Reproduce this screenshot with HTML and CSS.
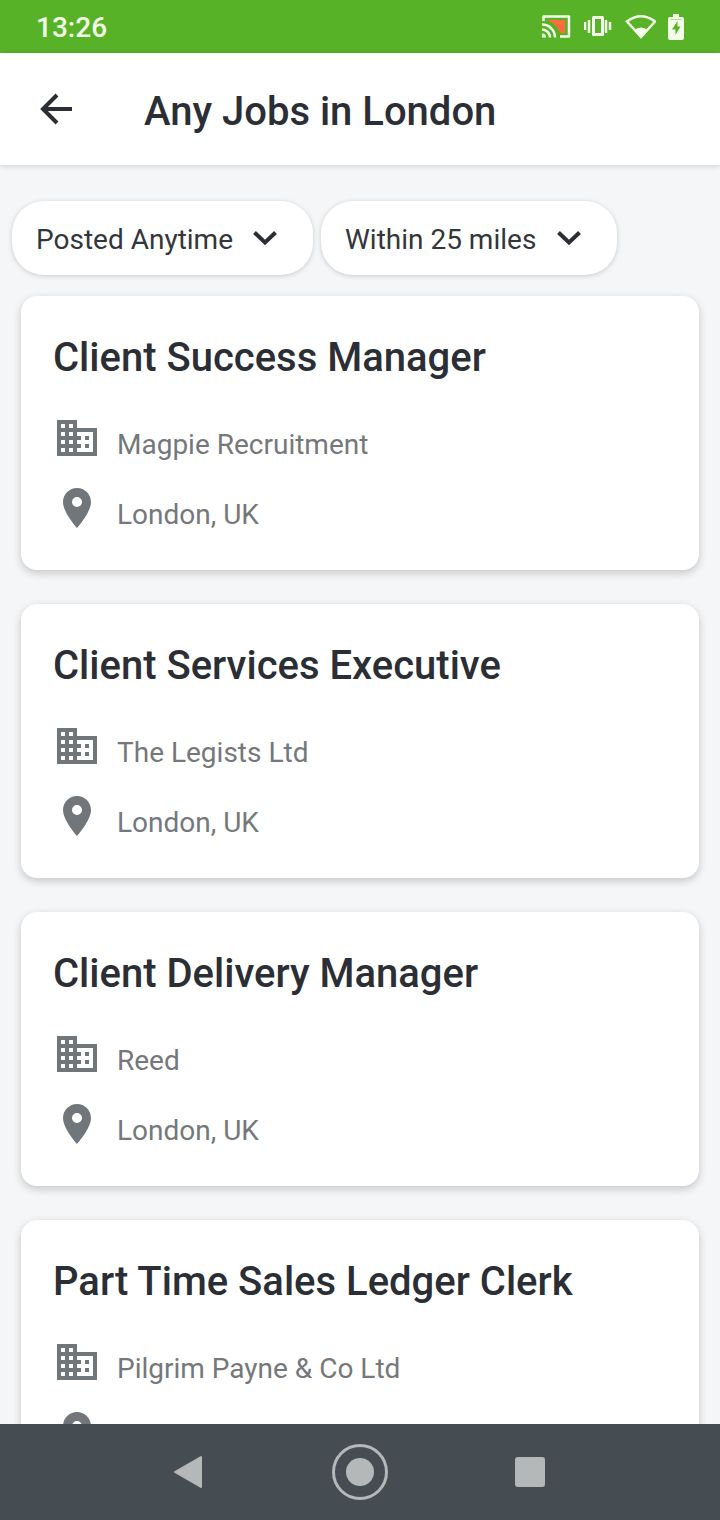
FILE: index.html
```html
<!DOCTYPE html>
<html lang="en">
<head>
    <meta charset="UTF-8">
    <meta name="viewport" content="width=device-width, initial-scale=1.0">
    <title>Any Jobs in London</title>
    <link rel="stylesheet" href="styles.css">
</head>
<body>

    <!-- Shared icons -->
    <svg class="sprite" aria-hidden="true">
        <symbol id="icon-company" viewBox="0 0 24 24">
            <path d="M12 7V3H2v18h20V7H12zM6 19H4v-2h2v2zm0-4H4v-2h2v2zm0-4H4V9h2v2zm0-4H4V5h2v2zm4 12H8v-2h2v2zm0-4H8v-2h2v2zm0-4H8V9h2v2zm0-4H8V5h2v2zm10 12h-8v-2h2v-2h-2v-2h2v-2h-2V9h8v10zm-2-8h-2v2h2v-2zm0 4h-2v2h2v-2z"/>
        </symbol>
        <symbol id="icon-place" viewBox="0 0 24 24">
            <path d="M12 2C8.13 2 5 5.13 5 9c0 5.25 7 13 7 13s7-7.75 7-13c0-3.87-3.13-7-7-7zm0 9.5a2.5 2.5 0 1 1 0-5 2.5 2.5 0 0 1 0 5z"/>
        </symbol>
        <symbol id="icon-chevron" viewBox="0 0 24 16">
            <path d="M1.500 2.500L12 12.500 22.500 2.500" fill="none" stroke="currentColor" stroke-width="4"/>
        </symbol>
    </svg>

    <div class="status-bar">
        <span class="time">13:26</span>
        <div class="status-icons">
            <svg width="30" height="26" viewBox="0 0 30 26">
                <path d="M6 6h17v13h-5C16 13 11 8 6 7z" fill="#ff6b3d"/>
                <path d="M1.500 7V2.500h25.500v20h-9" fill="none" stroke="#f4ffe9" stroke-width="2.500" stroke-linejoin="round"/>
                <path d="M0 10.500A13 13 0 0 1 13 23.500M0 15.500a8 8 0 0 1 8 8" fill="none" stroke="#f4ffe9" stroke-width="2.500"/>
                <path d="M0 19.500a4 4 0 0 1 4 4H0z" fill="#f4ffe9"/>
            </svg>
            <svg width="28" height="22" viewBox="0 0 28 22">
                <path d="M9.500 1.500h9v17h-9z" fill="none" stroke="#f4ffe9" stroke-width="3" stroke-linejoin="round"/>
                <path d="M5 4v13M22 4v13M1 6v8M26 6v8" stroke="#f4ffe9" stroke-width="2.500"/>
            </svg>
            <svg width="32" height="26" viewBox="0 0 32 26">
                <path d="M3 7.500Q17-3 31 7.500L17 23z" fill="none" stroke="#f4ffe9" stroke-width="2.500"/>
                <path d="M10 16q7-5 14 0l-7 8.500z" fill="#f4ffe9"/>
            </svg>
            <svg width="16" height="26" viewBox="0 0 16 26">
                <path d="M5 0h6v3h3q2 0 2 2v19q0 2-2 2H2q-2 0-2-2V5q0-2 2-2h3z" fill="#f4ffe9"/>
                <path d="M9.500 7L4 15.500h3.500V21l5-8.500h-3z" fill="#57b228"/>
                <path d="M2 5.500h12" stroke="#b4da9c"/>
            </svg>
        </div>
    </div>

    <header class="app-bar">
        <button class="back" aria-label="Back">
            <svg width="34" height="32" viewBox="0 0 34 32">
                <path d="M34 16H5M19 2L5 16l14 14" fill="none" stroke="currentColor" stroke-width="4"/>
            </svg>
        </button>
        <h1>Any Jobs in London</h1>
    </header>

    <main>
        <div class="filters">
            <label class="filter">
                <select aria-label="Date posted">
                    <option>Posted Anytime</option>
                </select>
                <svg class="chevron"><use href="#icon-chevron"/></svg>
            </label>
            <label class="filter">
                <select aria-label="Distance">
                    <option>Within 25 miles</option>
                </select>
                <svg class="chevron"><use href="#icon-chevron"/></svg>
            </label>
        </div>

        <!-- Job cards -->
        <div class="jobs">
            <article class="job">
                <h2>Client Success Manager</h2>
                <p><svg class="icon"><use href="#icon-company"/></svg>Magpie Recruitment</p>
                <p><svg class="icon"><use href="#icon-place"/></svg>London, UK</p>
            </article>
            <article class="job">
                <h2>Client Services Executive</h2>
                <p><svg class="icon"><use href="#icon-company"/></svg>The Legists Ltd</p>
                <p><svg class="icon"><use href="#icon-place"/></svg>London, UK</p>
            </article>
            <article class="job">
                <h2>Client Delivery Manager</h2>
                <p><svg class="icon"><use href="#icon-company"/></svg>Reed</p>
                <p><svg class="icon"><use href="#icon-place"/></svg>London, UK</p>
            </article>
            <article class="job">
                <h2>Part Time Sales Ledger Clerk</h2>
                <p><svg class="icon"><use href="#icon-company"/></svg>Pilgrim Payne &amp; Co Ltd</p>
                <p><svg class="icon"><use href="#icon-place"/></svg></p>
            </article>
        </div>
    </main>

    <nav class="nav-bar">
        <button aria-label="Back">
            <svg width="56" height="56" viewBox="0 0 56 56">
                <path d="M13 28l26-15v30z" fill="#b4b8b9" stroke="#b4b8b9" stroke-width="2" stroke-linejoin="round"/>
            </svg>
        </button>
        <button aria-label="Home">
            <svg width="56" height="56" viewBox="0 0 56 56">
                <circle cx="28" cy="28" r="26.500" fill="none" stroke="#b4b8b9" stroke-width="3"/>
                <circle cx="28" cy="28" r="14" fill="#b4b8b9"/>
            </svg>
        </button>
        <button aria-label="Recent apps">
            <svg width="56" height="56" viewBox="0 0 56 56">
                <rect x="13" y="13" width="30" height="30" rx="3" fill="#b4b8b9"/>
            </svg>
        </button>
    </nav>

</body>
</html>
```

FILE: styles.css
```css
* {
    box-sizing: border-box;
}
body {
    display: flex;
    flex-direction: column;
    height: 100vh;
    margin: 0;
    font-family: Roboto, sans-serif;
    color: #2b2f35;
    background: #f5f6f8;
}
h1, h2, p {
    margin: 0;
}
h1, h2 {
    font-size: 40px;
    font-weight: 500;
    line-height: 60px;
}
button {
    display: flex;
    padding: 0;
    border: none;
    color: inherit;
    background: none;
    cursor: pointer;
}
.sprite {
    position: absolute;
    width: 0;
    height: 0;
}

/* Status bar */
.status-bar {
    display: flex;
    flex: none;
    justify-content: space-between;
    align-items: center;
    height: 53px;
    padding: 0 36px;
    background: #57b228;
}
.time {
    padding-top: 2px;
    font-size: 28px;
    font-weight: 500;
    color: #f4ffe9;
}
.status-icons {
    display: flex;
    align-items: center;
    gap: 12px;
}

/* App bar */
.app-bar {
    display: flex;
    flex: none;
    align-items: center;
    gap: 72px;
    height: 112px;
    padding: 0 38px;
    background: #fff;
    box-shadow: 0 1px 6px rgba(0, 0, 0, 0.16);
    z-index: 1;
}
.app-bar h1 {
    padding-top: 6px;
}

main {
    flex: 1;
    min-height: 0;
    overflow: hidden;
}

/* Filters */
.filters {
    display: flex;
    gap: 8px;
    padding: 36px 12px 21px;
}
.filter {
    display: flex;
    align-items: center;
    gap: 20px;
    height: 74px;
    padding: 0 36px 0 24px;
    border-radius: 32px;
    background: #fff;
    box-shadow: 0 1px 5px rgba(0, 0, 0, 0.18);
}
.filter select {
    appearance: none;
    padding: 4px 0 0;
    border: none;
    font: 28px/40px Roboto, sans-serif;
    color: #33363a;
    background: none;
}
.chevron {
    width: 24px;
    height: 16px;
}

/* Job cards */
.jobs {
    display: flex;
    flex-direction: column;
    gap: 34px;
    padding: 0 21px;
}
.job {
    display: flex;
    flex-direction: column;
    gap: 10px;
    padding: 32px 32px 26px;
    border-radius: 16px;
    background: #fff;
    box-shadow: 0 3px 8px rgba(0, 0, 0, 0.2);
}
.job h2 {
    margin-bottom: 16px;
}
.job p {
    display: flex;
    gap: 16px;
    height: 60px;
    font-size: 28px;
    line-height: 62px;
    color: #75787b;
}
.icon {
    width: 48px;
    height: 48px;
    fill: #70767a;
}

/* System navigation */
.nav-bar {
    display: flex;
    flex: none;
    justify-content: center;
    align-items: center;
    gap: 114px;
    height: 96px;
    background: #454d53;
    z-index: 1;
}
```
